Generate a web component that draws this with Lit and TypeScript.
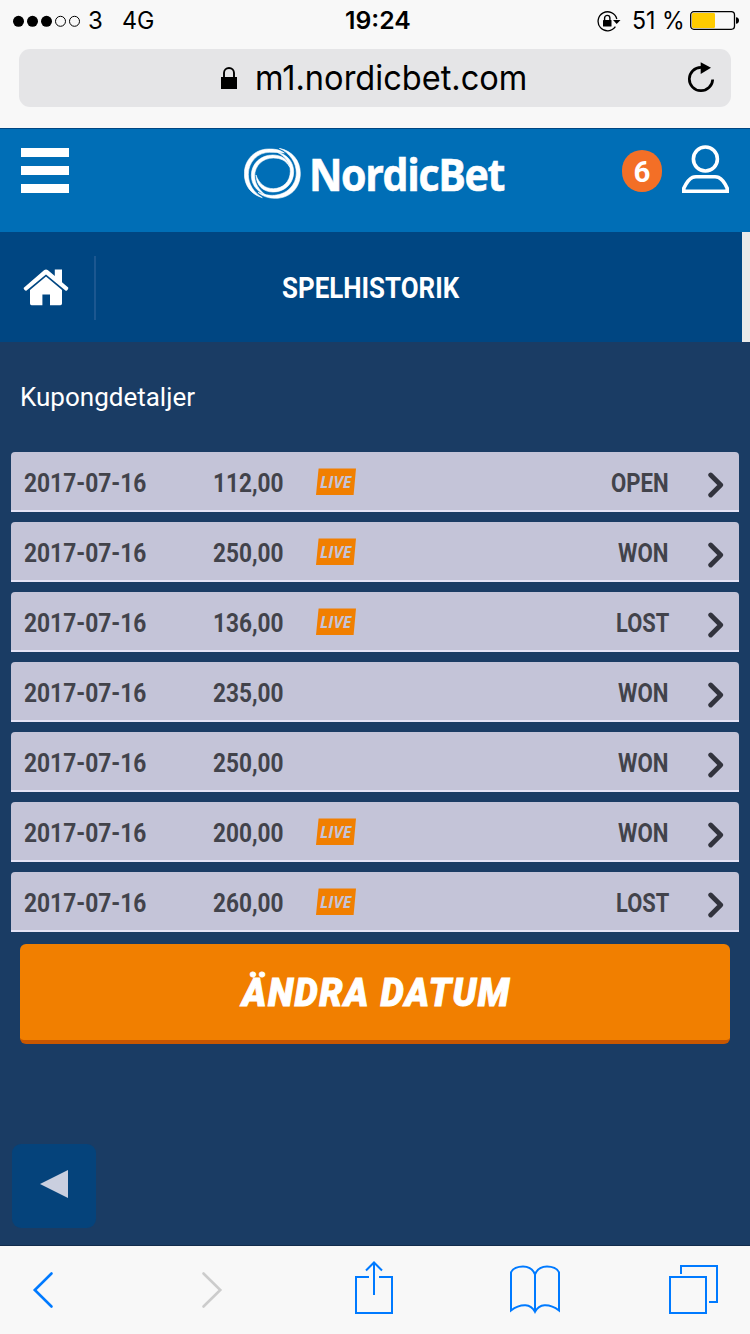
import { LitElement, html, css, svg, nothing } from "lit";
import { customElement, property, query } from "lit/decorators.js";

/** A single line of text, set to an exact measure by condensing the glyphs. */
@customElement("fit-text")
class FitText extends LitElement {
  @property({ type: Number }) measure = 100;
  @property() text = "";
  @query("span") span!: HTMLElement;

  static styles = css`
    :host { display: block; flex: none; white-space: pre; }
    span { display: inline-block; transform-origin: 0 50%; }
  `;

  updated() {
    this.style.width = this.measure + "px";
    const natural = this.span.offsetWidth;
    if (natural) this.span.style.transform = `scaleX(${this.measure / natural})`;
  }

  render() {
    return html`<span>${this.text}</span>`;
  }
}

interface Coupon {
  date: string;
  stake: string;
  live: boolean;
  result: string;
}

const D = "2017-07-16";
const coupons: Coupon[] = [
  { date: D, stake: "112,00", live: true, result: "OPEN" },
  { date: D, stake: "250,00", live: true, result: "WON" },
  { date: D, stake: "136,00", live: true, result: "LOST" },
  { date: D, stake: "235,00", live: false, result: "WON" },
  { date: D, stake: "250,00", live: false, result: "WON" },
  { date: D, stake: "200,00", live: true, result: "WON" },
  { date: D, stake: "260,00", live: true, result: "LOST" },
];

const resultMeasure: Record<string, number> = { OPEN: 58, WON: 50.5, LOST: 53 };

@customElement("status-bar")
class StatusBar extends LitElement {
  static styles = css`
    :host {
      display: grid; grid-template-columns: 1fr auto 1fr; align-items: center;
      height: 40px; padding: 0 11px 0 12px; font: 24px/40px Inter, sans-serif; color: #000;
    }
    .side { display: flex; align-items: center; height: 40px; }
    .end { justify-content: flex-end; }
    fit-text { padding-top: 1px; }
    .carrier { margin-left: 7px; }
    .net { margin-left: 19px; }
    .time { font-weight: 600; margin-left: 4px; }
    .lock { margin-right: 11px; }
    .batt { margin-left: 5px; }
    svg { display: block; flex: none; }
  `;

  render() {
    return html`
      <div class="side">
        <svg width="69" height="12" viewBox="0 0 69 12">
          ${[0, 1, 2, 3, 4].map((i) => svg`
            <circle cx=${6.5 + i * 14} cy="6.300" r=${i < 3 ? 5.5 : 5}
              fill=${i < 3 ? "#000" : "none"} stroke=${i < 3 ? "none" : "#000"} stroke-width="1"/>`)}
        </svg>
        <fit-text class="carrier" measure="15" text="3"></fit-text>
        <fit-text class="net" measure="32" text="4G"></fit-text>
      </div>
      <fit-text class="time" measure="66" text="19:24"></fit-text>
      <div class="side end">
        <svg class="lock" width="24" height="22" viewBox="0 0 24 22">
          <path d="M19.800 9A9.500 9.500 0 1 0 18.400 16.700" fill="none" stroke="#000" stroke-width="1.300"/>
          <path d="M16 10h7.500L19.700 14z"/>
          <rect x="6" y="10" width="8.500" height="6.500" rx=".6"/>
          <path d="M7.600 10.500V8a2.650 2.650 0 0 1 5.300 0v2.500" fill="none" stroke="#000" stroke-width="1.400"/>
        </svg>
        <fit-text measure="53" text="51 %"></fit-text>
        <svg class="batt" width="49" height="19" viewBox="0 0 49 19">
          <rect x=".7" y=".7" width="43.800" height="17.600" rx="3.200" fill="none" stroke="#000" stroke-width="1.300"/>
          <rect x="2" y="2" width="23" height="15" rx="1.200" fill="#fc0"/>
          <path d="M46 6.200c2 .2 3 1.400 3 3.300s-1 3.100-3 3.300z"/>
        </svg>
      </div>`;
  }
}

@customElement("address-bar")
class AddressBar extends LitElement {
  static styles = css`
    :host {
      display: flex; align-items: center; box-sizing: border-box; height: 58px; margin: 9px 19px 21px;
      border-radius: 11px; background: #e5e5e7; padding: 0 17px 0 202px;
      font: 34px/58px Inter, sans-serif; color: #000;
    }
    .host { margin-left: 18px; }
    .spacer { flex: 1; }
    svg { display: block; flex: none; }
  `;

  render() {
    return html`
      <svg width="16" height="22" viewBox="0 0 16 22">
        <rect y="10" width="16" height="12"/>
        <path d="M3 11V6a5 5 0 0 1 10 0v5" fill="none" stroke="#000" stroke-width="1.900"/>
      </svg>
      <fit-text class="host" measure="272" text="m1.nordicbet.com"></fit-text>
      <div class="spacer"></div>
      <svg width="27" height="32" viewBox="0 0 27 32">
        <path d="M14 5.300A11.700 11.700 0 1 0 25.700 17.500" fill="none" stroke="#000" stroke-width="2.700"/>
        <path d="M13.700 .2L24 5.800L13.700 11.900z"/>
      </svg>`;
  }
}

@customElement("site-header")
class SiteHeader extends LitElement {
  static styles = css`
    :host {
      display: flex; box-sizing: border-box; height: 104px; padding: 17px 21px 0;
      border-top: 1px solid #004682; background: #006eb6; color: #fff;
    }
    svg { display: block; flex: none; }
    .menu { margin-top: 2px; }
    .logo { margin: 2px 0 0 175px; }
    .name {
      margin: -3px 0 0 8px; height: 62px; font: 700 45px/62px "Open Sans", sans-serif;
      letter-spacing: -1.500px; -webkit-text-stroke: .6px #fff;
    }
    .count {
      display: flex; justify-content: center; width: 40px; height: 42px; margin: 4px 0 0 118px;
      border-radius: 21px; background: #f36f26; font: 700 29.500px/44px Roboto, sans-serif;
    }
    .user { margin-left: 20px; margin-top: -1px; }
  `;

  render() {
    return html`
      <svg class="menu" width="48" height="45" viewBox="0 0 48 45" fill="#fff">
        <path d="M0 0h48v9H0zM0 18h48v9H0zM0 36h48v9H0z"/>
      </svg>
      <svg class="logo" width="57" height="51" viewBox="732 69 171 153" fill="#fff" stroke="#fff" stroke-width="1.800">
        <path d="M853 84C838 73 822 72 806 72C765 72 733 104 733 146C733 182 753 208 787 218C761 202 745 178 745 148C745 111 773 82 809 82C825 82 838 83 853 84Z"/>
        <path d="M838 70C878 78 901 108 901 145C901 190 869 220 826 220C806 220 788 214 774 202C790 209 807 212 823 211C861 208 889 180 889 144C889 113 870 84 838 70Z"/>
        <path d="M869 126C862 101 843 90 818 90C782 90 754 116 754 151C754 178 770 200 797 210C776 194 764 175 764 153C764 122 788 99 820 99C843 99 858 107 869 126Z"/>
        <path d="M768 150C769 182 790 201 819 201C855 201 881 175 881 140C881 112 862 88 832 82C855 94 871 114 871 139C871 169 849 191 820 191C795 191 777 176 768 150Z"/>
      </svg>
      <fit-text class="name" measure="195" text="NordicBet"></fit-text>
      <div class="count">6</div>
      <svg class="user" width="47" height="48" viewBox="0 0 47 48" fill="none" stroke="#fff" stroke-width="3.600">
        <circle cx="23.400" cy="14" r="12"/>
        <path d="M1.800 46.200V43.200C4.500 37.500 7.500 33.800 10.500 32.400Q11.800 31.800 14 31.800H33Q35.200 31.800 36.500 32.400C39.500 33.800 42.700 37.500 45.200 43.200V46.200Z"/>
      </svg>`;
  }
}

@customElement("page-title")
class PageTitle extends LitElement {
  static styles = css`
    :host {
      display: flex; align-items: center; box-sizing: border-box; height: 110px; padding-left: 23px;
      background: #004682; border-right: 8px solid #eaeaea; color: #fff;
      font: 700 30px/36px Roboto, sans-serif;
    }
    svg { display: block; flex: none; }
    .rule { width: 2px; height: 64px; margin: 1px 0 0 25px; background: #1c5790; }
    .title { margin: 2px 0 0 186px; }
  `;

  render() {
    return html`
      <svg width="46" height="37" viewBox="0 0 46 37" fill="#fff">
        <path d="M.8 18.800L21 1.200Q23 -.4 25 1.200L31.800 7V.4H39V13.300L45.200 18.600Q45.600 20 44 21.400Q43 22.200 42.400 21.600L23 5.400L3.600 21.600Q2.600 22.200 1.600 21Q.3 19.500 .8 18.800Z"/>
        <path d="M23 7.600L39 21V34.500Q39 36.300 37.400 36.300H27V25.500H19.400V36.300H8.600Q7 36.300 7 34.500V21Z"/>
      </svg>
      <div class="rule"></div>
      <fit-text class="title" measure="177" text="SPELHISTORIK"></fit-text>`;
  }
}

@customElement("coupon-row")
class CouponRow extends LitElement {
  @property({ attribute: false }) coupon!: Coupon;

  static styles = css`
    :host {
      display: flex; align-items: center; box-sizing: border-box; height: 60px; padding: 4px 15px 0 13px;
      border-bottom: 2px solid #e4e3f5; border-radius: 4px 4px 0 0; background: #c4c4d8;
      color: #42434b; font: 700 26px/40px Roboto, sans-serif;
    }
    .stake { margin-left: 66.500px; }
    .live { display: block; flex: none; margin: -3px 0 0 32.500px; }
    .tag { font: italic 700 16.500px "Open Sans", sans-serif; fill: #c4c4d8; }
    .spacer { flex: 1; }
    .go { display: block; flex: none; margin: 3px 0 0 39.500px; }
  `;

  render() {
    const c = this.coupon;
    return html`
      <fit-text measure="122.500" text=${c.date}></fit-text>
      <fit-text class="stake" measure="70.500" text=${c.stake}></fit-text>
      ${c.live
        ? html`<svg class="live" width="40" height="27" viewBox="0 0 40 27">
            <path d="M2.600 .4H40L37.600 27H0Z" fill="#f17f00"/>
            <text class="tag" x="4" y="19.500" textLength="31.500" lengthAdjust="spacingAndGlyphs">LIVE</text>
          </svg>`
        : nothing}
      <div class="spacer"></div>
      <fit-text measure=${resultMeasure[c.result]} text=${c.result}></fit-text>
      <svg class="go" width="16" height="26" viewBox="0 0 16 26">
        <path d="M2.700 3L12.700 13L2.700 23" fill="none" stroke="#32333d" stroke-width="4.800" stroke-linecap="round" stroke-linejoin="round"/>
      </svg>`;
  }
}

@customElement("browser-toolbar")
class BrowserToolbar extends LitElement {
  static styles = css`
    :host {
      display: flex; align-items: flex-start; box-sizing: border-box;
      height: 89px; padding: 15px 32px 0; border-top: 1px solid #122c4c; background: #f8f8f8;
    }
    svg { display: block; flex: none; fill: none; stroke: #007aff; stroke-width: 2; }
    .back, .fwd { margin-top: 10px; stroke-width: 2.600; }
    .fwd { stroke: #ccc; margin-left: 147px; }
    .share { margin-left: 132px; }
    .book { margin: 4px 0 0 117px; }
    .tabs { margin: 4px 0 0 109px; }
  `;

  render() {
    return html`
      <svg class="back" width="22" height="38" viewBox="0 0 22 38"><path d="M19.500 2.500L2.800 19L19.500 35.500" stroke-linecap="round"/></svg>
      <svg class="fwd" width="22" height="38" viewBox="0 0 22 38"><path d="M2.500 2.500L19.300 19L2.500 35.500" stroke-linecap="round"/></svg>
      <svg class="share" width="38" height="53" viewBox="0 0 38 53">
        <path d="M14 16H1V52H37V16H24M19 34V2M11 9.500L19 1.500L27 9.500"/>
      </svg>
      <svg class="book" width="50" height="49" viewBox="0 0 50 49">
        <path d="M25 46V9.500C23 4 18 1.500 13 1.500S2.500 3.500 1 7.500V45.500C6 41.500 11 40 15.500 40.200C20 40.400 23 43 25 46.800C27 43 30 40.400 34.500 40.200C39 40 44 41.500 49 45.500V7.500C47.500 3.500 42 1.500 37 1.500S27 4 25 9.500"/>
      </svg>
      <svg class="tabs" width="50" height="49" viewBox="0 0 50 49">
        <path d="M1 12H37V48H1ZM12 9V1H48V37H40"/>
      </svg>`;
  }
}

@customElement("app-root")
class AppRoot extends LitElement {
  static styles = css`
    :host { display: flex; flex-direction: column; width: 750px; height: 1334px; background: #f8f8f8; overflow: hidden; }
    main { flex: 1; display: flex; flex-direction: column; background: #1a3c64; font-family: Roboto, sans-serif; }
    .label { margin: 39px 0 0 20px; height: 32px; font-size: 26px; line-height: 32px; color: #fff; }
    .list { display: flex; flex-direction: column; gap: 10px; margin: 39px 11px 0; }
    .change {
      display: flex; justify-content: center; box-sizing: border-box; height: 100px; margin: 12px 20px 0;
      padding-left: 2px; border-bottom: 4px solid #c95700; border-radius: 6px; background: #f17f00;
      color: #fff; font: italic 900 38.500px/97px Roboto, sans-serif; letter-spacing: 1.500px;
      -webkit-text-stroke: .9px #fff;
    }
    .back {
      display: flex; align-items: center; justify-content: center; width: 84px; height: 84px;
      margin: 100px 0 0 12px; border-radius: 9px; background: #05437b;
    }
    .back svg { display: block; margin-top: -4px; }
  `;

  render() {
    return html`
      <status-bar></status-bar>
      <address-bar></address-bar>
      <site-header></site-header>
      <page-title></page-title>
      <main>
        <fit-text class="label" measure="175" text="Kupongdetaljer"></fit-text>
        <div class="list">
          ${coupons.map((c) => html`<coupon-row .coupon=${c}></coupon-row>`)}
        </div>
        <div class="change"><fit-text measure="269" text="ÄNDRA DATUM"></fit-text></div>
        <div class="back">
          <svg width="28" height="28" viewBox="0 0 28 28"><path d="M0 14L28 0V28Z" fill="#cacfdf"/></svg>
        </div>
      </main>
      <browser-toolbar></browser-toolbar>`;
  }
}
